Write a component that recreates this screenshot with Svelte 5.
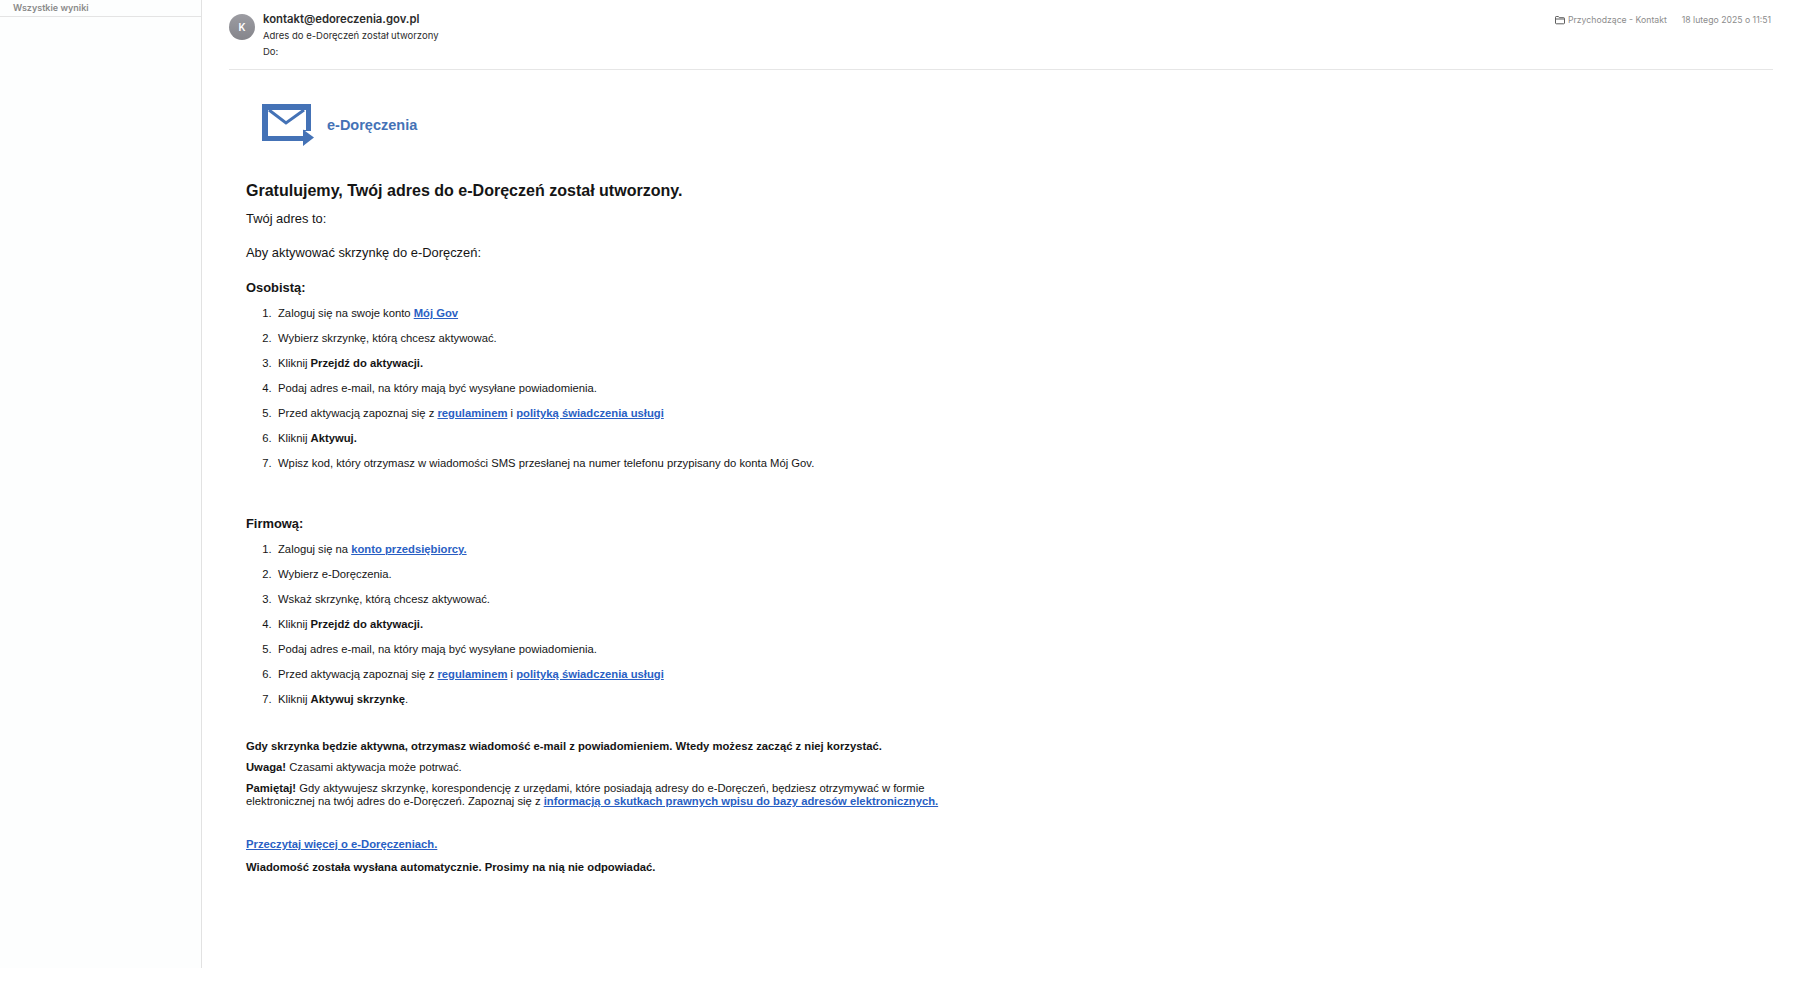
<script>
  const personal = [
    [{ t: 'Zaloguj się na swoje konto ' }, { a: 'Mój Gov' }],
    [{ t: 'Wybierz skrzynkę, którą chcesz aktywować.' }],
    [{ t: 'Kliknij ' }, { b: 'Przejdź do aktywacji.' }],
    [{ t: 'Podaj adres e-mail, na który mają być wysyłane powiadomienia.' }],
    [{ t: 'Przed aktywacją zapoznaj się z ' }, { a: 'regulaminem' }, { t: ' i ' }, { a: 'polityką świadczenia usługi' }],
    [{ t: 'Kliknij ' }, { b: 'Aktywuj.' }],
    [{ t: 'Wpisz kod, który otrzymasz w wiadomości SMS przesłanej na numer telefonu przypisany do konta Mój Gov.' }]
  ];
  const company = [
    [{ t: 'Zaloguj się na ' }, { a: 'konto przedsiębiorcy.' }],
    [{ t: 'Wybierz e-Doręczenia.' }],
    [{ t: 'Wskaż skrzynkę, którą chcesz aktywować.' }],
    [{ t: 'Kliknij ' }, { b: 'Przejdź do aktywacji.' }],
    [{ t: 'Podaj adres e-mail, na który mają być wysyłane powiadomienia.' }],
    [{ t: 'Przed aktywacją zapoznaj się z ' }, { a: 'regulaminem' }, { t: ' i ' }, { a: 'polityką świadczenia usługi' }],
    [{ t: 'Kliknij ' }, { b: 'Aktywuj skrzynkę' }, { t: '.' }]
  ];
</script>

{#snippet steps(items)}
  <ol>
    {#each items as item}
      <li>
        {#each item as part}{#if part.a}<a href="#top">{part.a}</a>{:else if part.b}<b>{part.b}</b>{:else}{part.t}{/if}{/each}
      </li>
    {/each}
  </ol>
{/snippet}

<div class="app">
  <aside class="side">
    <div class="side-title">Wszystkie wyniki</div>
  </aside>
  <main class="mail">
    <header class="head">
      <div class="avatar">K</div>
      <div class="who">
        <div class="from">kontakt@edoreczenia.gov.pl</div>
        <div class="meta subject">Adres do e-Doręczeń został utworzony</div>
        <div class="meta">Do:</div>
      </div>
      <div class="info">
        <svg class="folder" width="10" height="9" viewBox="0 0 10 9" fill="none" stroke="#5f5f5f" stroke-width="1">
          <path d="M.5 7V1.200c0-.4.3-.7.7-.7h2.200l1 1.200h4.400c.4 0 .7.3.7.7V7c0 .5-.3.8-.8.8H1.300C.8 7.800.5 7.500.5 7Z" />
          <path d="M.5 3h9" />
        </svg>
        <span class="box">Przychodzące - Kontakt</span>
        <span>18 lutego 2025 o 11:51</span>
      </div>
    </header>

    <article class="body">
      <div class="logo">
        <svg width="53" height="44" viewBox="0 0 53 44">
          <path fill="#4472b6" d="M0 1h49v27H41v10H0Z" />
          <path fill="#fff" d="M6 7h38v20H41v6H6Z" />
          <path fill="none" stroke="#4472b6" stroke-width="3" d="M7 7l17 13L42 7" />
          <path fill="#4472b6" d="M32 33h9v-6.500l11 8-11 8.500v-5.500h-9Z" />
        </svg>
        <span class="brand">e-Doręczenia</span>
      </div>

      <h1>Gratulujemy, Twój adres do e-Doręczeń został utworzony.</h1>
      <p class="lead first">Twój adres to:</p>
      <p class="lead">Aby aktywować skrzynkę do e-Doręczeń:</p>
      <h2>Osobistą:</h2>
      {@render steps(personal)}
      <h2 class="gap">Firmową:</h2>
      {@render steps(company)}

      <p class="note strong-note"><b>Gdy skrzynka będzie aktywna, otrzymasz wiadomość e-mail z powiadomieniem. Wtedy możesz zacząć z niej korzystać.</b></p>
      <p class="note"><b>Uwaga!</b> Czasami aktywacja może potrwać.</p>
      <p class="note wrap"><b>Pamiętaj!</b> Gdy aktywujesz skrzynkę, korespondencję z urzędami, które posiadają adresy do e-Doręczeń, będziesz otrzymywać w formie elektronicznej na twój adres do e-Doręczeń. Zapoznaj się z <a href="#top">informacją o skutkach prawnych wpisu do bazy adresów elektronicznych.</a></p>
      <p class="note more"><a href="#top">Przeczytaj więcej o e-Doręczeniach.</a></p>
      <p class="note auto"><b>Wiadomość została wysłana automatycznie. Prosimy na nią nie odpowiadać.</b></p>
    </article>
  </main>
</div>

<style>
  :global(body) {
    margin: 0;
    background: #fff;
    font-family: "Liberation Sans", Arial, sans-serif;
  }
  .app {
    display: flex;
    height: 968px;
    overflow: hidden;
  }
  .side {
    width: 201px;
    flex: none;
    border-right: 1px solid #e2e2e2;
    background: #fdfefe;
  }
  .side-title {
    height: 16px;
    padding-left: 13px;
    border-bottom: 1px solid #e4e4e4;
    font-family: Inter, sans-serif;
    font-size: 9px;
    font-weight: 600;
    line-height: 15px;
    color: #8a8a8a;
  }
  .mail {
    flex: 1;
    min-width: 0;
    padding: 0 27px;
  }
  .head {
    display: flex;
    height: 69px;
    border-bottom: 1px solid #e6e6e6;
  }
  .avatar {
    width: 26px;
    height: 26px;
    margin-top: 14px;
    border-radius: 50%;
    background: linear-gradient(#9c9ca2, #85858b);
    color: #fff;
    font-family: Inter, sans-serif;
    font-size: 10px;
    font-weight: 600;
    line-height: 26px;
    text-align: center;
    flex: none;
  }
  .who {
    margin-left: 8px;
    padding-top: 12px;
    color: #2c2c2c;
    font-family: Inter, sans-serif;
  }
  .from {
    font-size: 11.300px;
    font-weight: 600;
    line-height: 15px;
  }
  .meta {
    font-size: 9.500px;
    line-height: 15px;
  }
  .subject {
    margin-top: 1px;
    margin-bottom: 1px;
  }
  .info {
    margin-left: auto;
    display: flex;
    align-items: flex-start;
    padding: 14px 2px 0 0;
    font-family: Inter, sans-serif;
    font-size: 8.700px;
    line-height: 12px;
    color: #8c8c8c;
    white-space: nowrap;
  }
  .folder {
    margin: 2px 3px 0 0;
  }
  .box {
    margin-right: 15px;
  }
  .body {
    padding: 33px 0 0 17px;
    color: #151515;
  }
  .logo {
    display: flex;
    align-items: center;
    margin-left: 16px;
    height: 44px;
  }
  .brand {
    margin-left: 12px;
    margin-top: -1px;
    font-size: 14.500px;
    font-weight: 700;
    color: #4472b6;
  }
  h1 {
    margin: 0;
    padding-top: 33px;
    font-size: 16.050px;
    line-height: 20px;
    font-weight: 700;
  }
  .lead {
    margin: 0;
    font-size: 12.900px;
    line-height: 16px;
  }
  .first {
    margin-top: 11px;
    margin-bottom: 18px;
  }
  h2 {
    margin: 19px 0 0;
    font-size: 12.900px;
    line-height: 16px;
    font-weight: 700;
  }
  h2.gap {
    margin-top: 36px;
  }
  ol {
    margin: 9px 0 0;
    padding: 0 0 0 32px;
  }
  li {
    height: 25px;
    font-size: 11.260px;
    line-height: 17px;
  }
  li::marker {
    content: counter(list-item) ".\00a0\00a0";
  }
  a {
    color: #2a5fc4;
    font-weight: 700;
    text-decoration: underline;
  }
  .note {
    margin: 0;
    font-size: 11.260px;
    line-height: 13px;
  }
  .strong-note {
    margin-top: 24px;
  }
  .note + .note {
    margin-top: 8px;
  }
  .wrap {
    width: 720px;
  }
  .note.more {
    margin-top: 30px;
  }
  .note.auto {
    margin-top: 10px;
  }
</style>
